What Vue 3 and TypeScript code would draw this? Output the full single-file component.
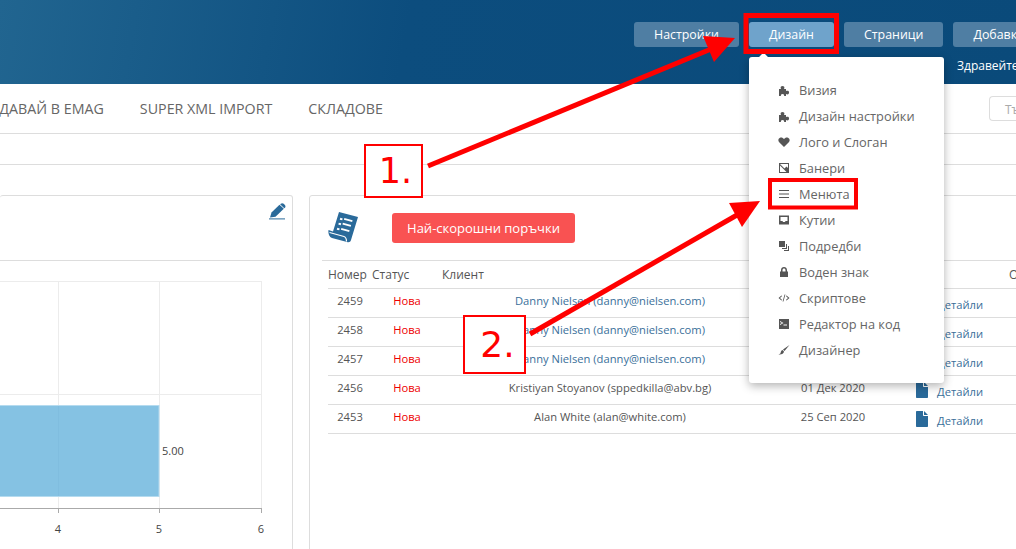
<template>
  <div class="page">
    <header class="top">
      <div class="top-buttons">
        <button
          v-for="item in topButtons"
          :key="item"
          class="top-btn"
          :class="{ active: item === 'Дизайн' }"
        >
          {{ item }}
        </button>
      </div>
      <div class="greeting">Здравейте, Администратор</div>
    </header>

    <nav class="nav">
      <div class="nav-list">
        <span v-for="item in navItems" :key="item" class="nav-item">{{ item }}</span>
      </div>
      <div class="search"><span>Търсене</span></div>
    </nav>

    <div class="subbar"></div>

    <main class="content">
      <section class="card chart-card">
        <div class="chart-head">
          <svg class="pencil" viewBox="0 0 17 17" width="17" height="17">
            <path d="M1 14.500 2.500 9.500 10.500 1.800 14.800 5.800 6.500 13.800Z" fill="#2a6a9a" />
            <path d="M11.800 .8c.8-.8 2-.8 2.900 0l1.200 1.200c.8.800.8 2 0 2.800l-.6.500-4.200-4Z" fill="#2a6a9a" />
            <rect x="0" y="15.400" width="16" height="1" fill="#2a6a9a" />
          </svg>
        </div>
        <svg class="chart" viewBox="0 0 292 288" width="292" height="288">
          <g stroke="#ececec" fill="none">
            <path d="M0 20.500H261.500M0 133.500H261.500" />
            <path d="M58.500 20V252M159.500 20V252M261.500 20V252" />
          </g>
          <rect x="-1" y="144.500" width="160" height="91" fill="#85c2e3" stroke="#b5dbef" />
          <path d="M58.500 145V235" stroke="#80bddf" />
          <path d="M0 247.500H261.500M58.500 247V252M159.500 247V252M261.500 247V252" stroke="#aaa" fill="none" />
          <g class="chart-text">
            <text x="162" y="194">5.00</text>
            <text x="58" y="272" text-anchor="middle">4</text>
            <text x="159" y="272" text-anchor="middle">5</text>
            <text x="261" y="272" text-anchor="middle">6</text>
          </g>
        </svg>
      </section>

      <section class="card orders-card">
        <div class="orders-head">
          <svg class="scroll" viewBox="0 0 30 32" width="30" height="32">
            <path d="M11 0 30 5 23 28C22.500 30 21 30.500 19 30L4 26C1.500 25 0 22 .5 18L5 19.500Z" fill="#2a6a9a" />
            <g fill="#fff">
              <rect x="12" y="6" width="2.500" height="2" transform="rotate(15 13 7)" />
              <rect x="16" y="7" width="8.500" height="1.800" transform="rotate(15 20 8)" />
              <rect x="10.500" y="11" width="2.500" height="2" transform="rotate(15 12 12)" />
              <rect x="14.500" y="12" width="8.500" height="1.800" transform="rotate(15 19 13)" />
              <rect x="9" y="16" width="2.500" height="2" transform="rotate(15 10 17)" />
              <rect x="13" y="17" width="8.500" height="1.800" transform="rotate(15 17 18)" />
            </g>
            <path d="M1.500 20.500 16 24.500C17.500 25 18.500 27 18.500 29.500" fill="none" stroke="#fff" stroke-width="1.200" />
          </svg>
          <button class="latest">Най-скорошни поръчки</button>
        </div>
        <div class="orders">
          <div class="row head">
            <span class="left">Номер</span>
            <span class="left">Статус</span>
            <span class="left">Клиент</span>
            <span>Дата</span>
            <span></span>
            <span class="left options">Опции</span>
          </div>
          <div v-for="order in orders" :key="order.id" class="row">
            <span>{{ order.id }}</span>
            <span class="status">Нова</span>
            <span :class="{ link: order.linked }">{{ order.client }}</span>
            <span class="date">{{ order.date }}</span>
            <span class="details">
              <svg viewBox="0 0 12 16" width="12" height="16">
                <path d="M0 1C0 .4.400 0 1 0H7V4C7 4.600 7.400 5 8 5H12V15C12 15.600 11.600 16 11 16H1C.4 16 0 15.600 0 15ZM8 0 12 4H8Z" fill="#2a6a9a" />
              </svg>
              <span class="link">Детайли</span>
            </span>
            <span></span>
          </div>
        </div>
      </section>
    </main>

    <div class="menu">
      <span class="menu-caret"></span>
      <a v-for="item in menuItems" :key="item.label" class="menu-item">
        <svg class="menu-icon" viewBox="0 0 12 12" width="12" height="12">
          <path :d="item.icon" fill="#555" fill-rule="evenodd" />
        </svg>
        {{ item.label }}
      </a>
    </div>

    <svg class="marks" viewBox="0 0 1016 549" width="1016" height="549">
      <rect x="746" y="15.500" width="90.500" height="36" fill="none" stroke="#f00" stroke-width="5" />
      <rect x="770" y="180" width="86" height="27.500" fill="none" stroke="#f00" stroke-width="4" />
      <path d="M428 166 716 47" stroke="#f00" stroke-width="5" fill="none" />
      <path d="M703 36 735 38 714 62Z" fill="#f00" />
      <path d="M530 334 744 211" stroke="#f00" stroke-width="5" fill="none" />
      <path d="M729 203 760 201 742 227Z" fill="#f00" />
    </svg>
    <div class="callout one">1.</div>
    <div class="callout two">2.</div>
  </div>
</template>

<script setup lang="ts">
const topButtons = ["Настройки", "Дизайн", "Страници", "Добавки"];
const navItems = ["ПРОДАВАЙ В EMAG", "SUPER XML IMPORT", "СКЛАДОВЕ"];

const puzzle =
  "M1 5H3C2.500 4 2.500 3 3 2.500 3.800 1.700 5.200 1.700 6 2.500 6.500 3 6.500 4 6 5H8V7C9 6.500 10 6.500 10.500 7 11.300 7.800 11.300 9.200 10.500 10 10 10.500 9 10.500 8 10V12H6C6.500 11 6 10 4.500 10 3 10 2.500 11 3 12H1Z";

const menuItems = [
  { label: "Визия", icon: puzzle },
  { label: "Дизайн настройки", icon: puzzle },
  {
    label: "Лого и Слоган",
    icon: "M6 11 1.200 6.300C-.2 4.800.2 2.400 2 1.700 3.500 1.100 5 1.700 6 3 7 1.700 8.500 1.100 10 1.700 11.800 2.400 12.200 4.800 10.800 6.300Z",
  },
  {
    label: "Банери",
    icon: "M1 1H11V11H1ZM2 2 6.500 6.500 8.500 4.500 10 6V2ZM2 3.500V10H8.500Z",
  },
  {
    label: "Менюта",
    icon: "M1 2H11V3H1ZM1 5.500H11V6.500H1ZM1 9H11V10H1Z",
  },
  {
    label: "Кутии",
    icon: "M1 1.500H11V10.500H1ZM2.500 3V7H4.500L5 8H7L7.500 7H9.500V3Z",
  },
  {
    label: "Подредби",
    icon: "M1 1H7V7H1ZM8 4H9V9H4V8H8ZM10 6H11V11H6V10H10Z",
  },
  {
    label: "Воден знак",
    icon: "M2 5.500H3V4C3 2.300 4.300 1 6 1 7.700 1 9 2.300 9 4V5.500H10V11H2ZM4.500 5.500H7.500V4C7.500 3.200 6.800 2.500 6 2.500 5.200 2.500 4.500 3.200 4.500 4Z",
  },
  {
    label: "Скриптове",
    icon: "M3.500 3.500 4.100 4.100 2 6 4.100 7.900 3.500 8.500 .5 6ZM8.500 3.500 11.500 6 8.500 8.500 7.900 7.900 10 6 7.900 4.100ZM6.600 2.500H7.400L5.400 9.500H4.600Z",
  },
  {
    label: "Редактор на код",
    icon: "M1 1H11V11H1ZM2 3V4L4 5 2 6V7L5.500 5ZM5.500 6.500V7.500H9V6.500Z",
  },
  {
    label: "Дизайнер",
    icon: "M11.500 1 6.500 7 5 5.500ZM4.500 6 6 7.500C5.800 9.500 3.500 11 .5 10.500 2 10 2.500 9.500 2.700 8.500 2.900 7.300 3.500 6.300 4.500 6Z",
  },
];

const orders = [
  { id: 2459, client: "Danny Nielsen (danny@nielsen.com)", date: "11 Яну 2021", linked: true },
  { id: 2458, client: "Danny Nielsen (danny@nielsen.com)", date: "11 Яну 2021", linked: true },
  { id: 2457, client: "Danny Nielsen (danny@nielsen.com)", date: "11 Яну 2021", linked: true },
  { id: 2456, client: "Kristiyan Stoyanov (sppedkilla@abv.bg)", date: "01 Дек 2020", linked: false },
  { id: 2453, client: "Alan White (alan@white.com)", date: "25 Сеп 2020", linked: false },
];
</script>

<style>
html,
body {
  margin: 0;
  background: #fff;
}
</style>

<style scoped>
.page {
  position: relative;
  width: 1016px;
  height: 549px;
  overflow: hidden;
  background: #fff;
  color: #555;
  font-family: "Open Sans", sans-serif;
  font-size: 11.2px;
}

.top {
  height: 84px;
  box-sizing: border-box;
  padding: 22px 0 0 634px;
  background: linear-gradient(100deg, #216590 0%, #0c4d7e 40%, #0a4a7a 100%);
  white-space: nowrap;
  overflow: hidden;
}

.top-buttons {
  display: flex;
  gap: 10px;
}

.top-btn {
  flex: none;
  height: 25px;
  padding: 0 20px;
  border: 0;
  border-radius: 3px;
  background: #4f7ea3;
  color: #fff;
  font: 12.4px "Open Sans", sans-serif;
}

.top-btn.active {
  background: #6fa3cb;
}

.greeting {
  margin: 10px 0 0 323px;
  color: #fff;
  font-size: 12px;
  line-height: 17px;
}

.nav {
  display: flex;
  align-items: center;
  justify-content: space-between;
  height: 49px;
  border-bottom: 1px solid #ddd;
}

.nav-list {
  display: flex;
  justify-content: flex-end;
  gap: 36px;
  width: 383px;
  white-space: nowrap;
}

.nav-item {
  flex: none;
  color: #666;
  font-size: 14.25px;
}

.search {
  flex: none;
  box-sizing: border-box;
  width: 27px;
  height: 25px;
  padding: 4px 0 0 15px;
  overflow: hidden;
  border: 1px solid #ddd;
  border-right: 0;
  border-radius: 4px 0 0 4px;
  color: #aaa;
  font-size: 12px;
  white-space: nowrap;
}

.subbar {
  height: 30px;
  border-bottom: 1px solid #ddd;
}

.content {
  display: flex;
  gap: 16px;
  padding-top: 30px;
}

.card {
  flex: none;
  box-sizing: border-box;
  height: 400px;
  border: 1px solid #ddd;
  border-radius: 3px;
}

.chart-card {
  width: 293px;
  border-left: 0;
}

.chart-head {
  display: flex;
  justify-content: flex-end;
  box-sizing: border-box;
  width: 280px;
  height: 65px;
  padding: 7px 0 0;
  border-bottom: 1px solid #ddd;
}

.pencil {
  margin-right: -6px;
}

.chart {
  display: block;
}

.chart-text {
  fill: #444;
  font-size: 11px;
}

.orders-card {
  width: 760px;
  padding-left: 12px;
}

.orders-head {
  display: flex;
  align-items: center;
  gap: 34px;
  height: 64px;
  padding-left: 6px;
  border-bottom: 1px solid #ddd;
}

.scroll {
  flex: none;
}

.latest {
  width: 183px;
  height: 30px;
  margin-top: -1px;
  padding: 0;
  border: 0;
  border-radius: 3px;
  background: #f95252;
  color: #fff;
  font: 13px "Open Sans", sans-serif;
}

.orders {
  margin-left: 6px;
}

.row {
  display: grid;
  grid-template-columns: 44px 70px 336px 108px 108px 100px;
  align-items: center;
  height: 28px;
  border-bottom: 1px solid #ddd;
  text-align: center;
  white-space: nowrap;
}

.row > span:not(.details) {
  margin-top: -5px;
}

.row > .date {
  padding-left: 2px;
}

.row.head {
  height: 27px;
  font-size: 12px;
}

.row.head > span {
  margin-top: 0;
}

.row.head span:nth-child(4) {
  font-size: 11px;
}

.left {
  text-align: left;
}

.options {
  padding-left: 15px;
}

.status {
  color: #e00;
}

.link {
  color: #3a6f9a;
}

.details {
  display: flex;
  align-items: center;
  gap: 9px;
  padding-left: 30px;
}

.details .link {
  margin-top: 2px;
}

.details svg {
  margin-top: -1px;
}

.menu {
  position: absolute;
  top: 57px;
  left: 749px;
  box-sizing: border-box;
  width: 195px;
  height: 326px;
  padding: 20px 0 0 29px;
  border-radius: 3px;
  background: #fff;
  box-shadow: 0 3px 10px rgba(0, 0, 0, 0.3);
}

.menu-caret {
  position: absolute;
  top: -3px;
  left: 11px;
  width: 7px;
  height: 7px;
  background: #fff;
  transform: rotate(45deg);
}

.menu-item {
  display: flex;
  align-items: center;
  gap: 9px;
  height: 26px;
  color: #666;
  font-size: 12.8px;
}

.menu-icon {
  flex: none;
}

.marks {
  position: absolute;
  top: 0;
  left: 0;
  pointer-events: none;
}

.callout {
  position: absolute;
  display: flex;
  align-items: center;
  justify-content: center;
  box-sizing: border-box;
  border: 2px solid #f00;
  background: #fff;
  color: #f00;
  font-family: "DejaVu Sans", sans-serif;
  line-height: 1;
}

.callout.one {
  top: 144px;
  left: 364px;
  width: 59px;
  height: 54px;
  padding-left: 4px;
  font-size: 35px;
}

.callout.two {
  top: 315px;
  left: 463px;
  width: 63px;
  height: 59px;
  padding-left: 6px;
  font-size: 36px;
}
</style>
